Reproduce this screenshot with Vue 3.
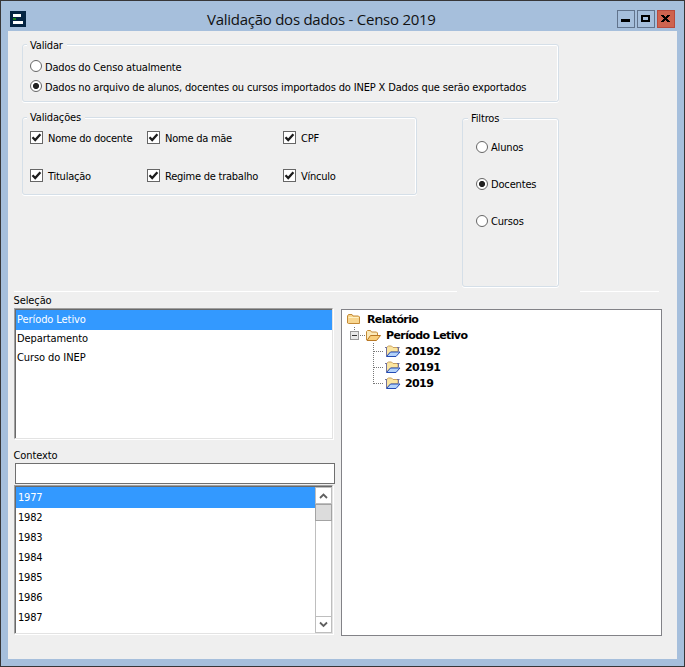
<script setup>
import { ref } from 'vue'

const source = ref('arquivo')
const filter = ref('Docentes')
const selected = ref('Período Letivo')
const context = ref('1977')
const search = ref('')
const checks = ref([
  { label: 'Nome do docente', on: true },
  { label: 'Nome da mãe', on: true },
  { label: 'CPF', on: true },
  { label: 'Titulação', on: true },
  { label: 'Regime de trabalho', on: true },
  { label: 'Vínculo', on: true },
])
const sources = [
  { id: 'atual', label: 'Dados do Censo atualmente' },
  { id: 'arquivo', label: 'Dados no arquivo de alunos, docentes ou cursos importados do INEP X Dados que serão exportados' },
]
const filters = ['Alunos', 'Docentes', 'Cursos']
const selections = ['Período Letivo', 'Departamento', 'Curso do INEP']
const years = ['1977', '1982', '1983', '1984', '1985', '1986', '1987']
const periods = ['20192', '20191', '2019']
</script>

<template>
  <div class="window">
    <header class="titlebar">
      <svg class="logo" width="16" height="16" shape-rendering="crispEdges">
        <rect width="16" height="16" fill="#052442" />
        <rect x="3" y="3" width="8" height="3" fill="#fff" />
        <rect x="3" y="7" width="3" height="2" fill="#188018" />
        <rect x="3" y="10" width="10" height="3" fill="#fff" />
      </svg>
      <h1 class="title">Validação dos dados - Censo 2019</h1>
      <div class="buttons">
        <button class="wbtn">
          <svg width="16" height="16" shape-rendering="crispEdges"><rect x="3" y="8" width="9" height="3" /></svg>
        </button>
        <button class="wbtn">
          <svg width="16" height="16" shape-rendering="crispEdges"><path fill-rule="evenodd" d="M3 4h9v7H3zM5 6v3h5V6z" /></svg>
        </button>
        <button class="wbtn close">
          <svg width="16" height="16" shape-rendering="crispEdges"><path d="M3 4h3v1h1v1h1V5h1V4h3v1h-1v1h-1v1H9v1h1v1h1v1h1v1H9v-1H8V9H7v1H6v1H3v-1h1V9h1V8h1V7H5V6H4V5H3z" /></svg>
        </button>
      </div>
    </header>

    <main class="client">
      <section class="top">
        <div class="group validar">
          <span class="legend">Validar</span>
          <label v-for="s in sources" :key="s.id" class="option" :class="s.id" @click="source = s.id">
            <span class="radio" :class="{ on: source === s.id }"></span><span class="txt">{{ s.label }}</span>
          </label>
        </div>
        <div class="row">
          <div class="group validacoes">
            <span class="legend">Validações</span>
            <label v-for="c in checks" :key="c.label" class="option" @click="c.on = !c.on">
              <span class="check">
                <svg v-if="c.on" width="11" height="11"><path d="M1.5 5.2 4.2 8 9.4 2.2" fill="none" stroke="#1c1c1c" stroke-width="2.3" /></svg>
              </span>
              <span class="txt">{{ c.label }}</span>
            </label>
          </div>
          <div class="group filtros">
            <span class="legend">Filtros</span>
            <label v-for="f in filters" :key="f" class="option" @click="filter = f">
              <span class="radio" :class="{ on: filter === f }"></span><span class="txt">{{ f }}</span>
            </label>
          </div>
        </div>
      </section>

      <div class="rules"><i class="rule-left"></i><i class="rule-right"></i></div>

      <section class="bottom">
        <div class="left">
          <div class="caption selecao">Seleção</div>
          <ul class="list selections">
            <li v-for="s in selections" :key="s" :class="{ active: selected === s }" @click="selected = s">{{ s }}</li>
          </ul>
          <div class="caption contexto">Contexto</div>
          <input v-model="search" class="search" />
          <div class="list years">
            <ul>
              <li v-for="y in years" :key="y" :class="{ active: context === y }" @click="context = y">{{ y }}</li>
            </ul>
            <div class="scroll">
              <div class="arrow"><svg width="15" height="15"><path d="M4 10 7.500 6.500 11 10" /></svg></div>
              <div class="thumb"></div>
              <div class="track"></div>
              <div class="arrow down"><svg width="15" height="15"><path d="M4 5.500 7.500 9 11 5.500" /></svg></div>
            </div>
          </div>
        </div>

        <div class="tree">
          <div class="node root">
            <svg width="13" height="16">
              <path d="M.5 12v-7l1-1.500h3.500l1 1.500h5.500l1 1v6.500h-11z" fill="#f8d690" stroke="#c48a35" />
              <path d="M1.500 6.500h10" stroke="#fff2c4" />
            </svg>
            <b>Relatório</b>
          </div>
          <div class="node branch">
            <svg width="32" height="16">
              <path d="M4.500 0v4M10 8.500h6" class="dots" />
              <rect x=".5" y="4.500" width="8" height="8" fill="#e8e8e8" stroke="#999" />
              <path d="M2 8.500h5" stroke="#333" />
              <path d="M16.500 13V4.500l1-1h3l1 1.500h5l1 1v2.500" fill="#fbe9b8" stroke="#c48a35" />
              <path d="M17 13.500l3.500-5h10l-4 5z" fill="#f9cf7c" stroke="#b97824" />
            </svg>
            <b>Período Letivo</b>
          </div>
          <div v-for="(p, i) in periods" :key="p" class="node leaf">
            <svg width="27" height="16">
              <path :d="i < 2 ? 'M.5 0v16' : 'M.5 0v9'" class="dots" />
              <path d="M1 8.500h10" class="dots" />
              <path d="M13.500 13V4.500l2-1.500h3l1.500 1.500h5V9h-7z" fill="#fbe5a0" stroke="#c9a060" />
              <path d="M12 4.500h2M13.500 5v8M24 4.500h2.500M25.500 5v3" fill="none" stroke="#72719b" />
              <path d="M13.500 13.500l4-4.500h9.500l-4 4.500z" fill="#b3d2fa" stroke="#234bb5" />
            </svg>
            <b>{{ p }}</b>
          </div>
        </div>
      </section>
    </main>
  </div>
</template>

<style>
body { margin: 0; overflow: hidden; }
</style>

<style scoped>
* { box-sizing: border-box; }
ul { list-style: none; margin: 0; padding: 0; }
.window {
  width: 685px; height: 667px; padding: 0 7px 7px;
  border: 1px solid #373638; background: #a6bfdc;
  display: flex; flex-direction: column;
  font: 11px/14px "DejaVu Sans Condensed", "DejaVu Sans", sans-serif;
  font-stretch: condensed; letter-spacing: -0.16px; color: #000;
}
.titlebar { height: 30px; flex: none; display: flex; align-items: flex-start; padding: 9px 2px 0; }
.logo { margin-top: 1px; flex: none; }
.title { flex: 1; margin: -1px 0 0 -2px; padding-left: 183px; font: 400 15px/20px "Open Sans", sans-serif; letter-spacing: -0.26px; color: #111; white-space: nowrap; }
.buttons { display: flex; gap: 2px; }
.wbtn { width: 18px; height: 18px; padding: 0; border: 1px solid #61738c; background: #a6bfdc; }
.wbtn svg { display: block; }
.wbtn.close { background: #ce634f; border-color: #b84a3d; }
.client { flex: 1; background: #efefef; display: flex; flex-direction: column; }
.top { padding: 13px 0 0 14px; height: 260px; }
.group { position: relative; border: 1px solid #d5dfe8; border-radius: 3px; box-shadow: inset 0 1px #fff, inset -1px 0 #fff, 0 1px #fff; }
.legend { position: absolute; left: 4px; top: -7px; padding: 0 4px 0 3px; background: #efefef; }
.option { display: flex; align-items: center; white-space: nowrap; }
.validar { width: 537px; height: 58px; padding: 11px 0 0 7px; }
.validar .legend { top: -6px; }
.validar .option { height: 20px; }
.radio { width: 12px; height: 12px; border: 1px solid #666; border-radius: 50%; background: #fff; flex: none; }
.radio.on { background: radial-gradient(circle, #222 0 2.7px, #fff 3.4px); }
.validar .txt { margin: 3px 0 0 3px; }
.row { display: flex; gap: 45px; margin-top: 15px; align-items: flex-start; }
.validacoes { width: 395px; height: 78px; padding: 1px 0 0 7px; display: grid; grid-template-columns: 117px 136px 1fr; grid-template-rows: 38px 38px; }
.check { width: 13px; height: 13px; border: 1px solid #666; background: #fff; flex: none; margin-top: -1px; }
.check svg { display: block; }
.validacoes .txt { margin-left: 5px; margin-top: 2px; letter-spacing: -0.24px; }
.filtros { width: 97px; height: 169px; margin-top: 1px; padding: 9px 0 0 13px; }
.filtros .legend { left: 5px; }
.filtros .option { height: 37px; }
.filtros .txt { margin: 3px 0 0 3px; }
.rules { display: flex; gap: 123px; padding-left: 6px; height: 2px; flex: none; }
.rules i { height: 1px; background: #fff; }
.rule-left { width: 443px; }
.rule-right { width: 79px; }
.bottom { display: flex; gap: 7px; padding-left: 6px; }
.left { width: 320px; }
.caption { height: 15px; line-height: 16px; margin-left: -0.5px; letter-spacing: -0.1px; }
.contexto { margin-top: 9px; }
.list { width: 319px; background: #fff; border: 1px solid; border-color: #a0a0a0 #e3e3e3 #e3e3e3 #a0a0a0; box-shadow: inset 1px 1px #696969, 1px 1px #fff; }
.list li { white-space: nowrap; letter-spacing: -0.08px; }
.selections { height: 131px; padding: 1px 0 0 1px; }
.selections li { height: 19px; line-height: 19px; padding-left: 1px; }
.selections li:first-child { height: 20px; }
.selections li + li { line-height: 17px; }
.list .active { background: #3399ff; color: #fff; }
.search { display: block; width: 320px; height: 21px; margin: 0 0 1px 1px; padding: 0 3px; border: 1px solid #6f6f6f; background: #fff; outline: 0; font: inherit; }
.years { height: 149px; display: flex; padding: 1px 0 0 1px; }
.years ul { flex: 1; }
.years li { height: 20px; line-height: 20px; padding-left: 2px; letter-spacing: -0.2px; }
.years li:first-child { height: 21px; line-height: 21px; }
.scroll { width: 17px; display: flex; flex-direction: column; border: 1px solid #bebebe; background: #fff; }
.arrow { height: 16px; border-bottom: 1px solid #bebebe; flex: none; }
.arrow svg { display: block; }
.arrow path { fill: none; stroke: #606060; stroke-width: 1.8; }
.arrow.down { border-bottom: 0; border-top: 1px solid #bebebe; }
.thumb { height: 17px; margin: 0 -1px; border: 1px solid #a3a3a3; background: #dcdcdc; flex: none; }
.track { flex: 1; }
.tree { width: 321px; height: 327px; margin-top: 16px; padding: 1px 0 0 5px; background: #fff; border: 1px solid #828287; }
.node { display: flex; align-items: center; height: 16px; white-space: nowrap; }
.node svg { display: block; flex: none; overflow: visible; }
.node b { font: bold 11px/16px "DejaVu Sans", sans-serif; letter-spacing: -0.6px; padding-top: 2px; }
.root b { margin-left: 7px; }
.branch { padding-left: 3px; }
.branch b { margin-left: 4px; }
.leaf { padding-left: 26px; }
.leaf b { margin-left: 5px; }
.dots { fill: none; stroke: #777; stroke-dasharray: 1 1; }
</style>
